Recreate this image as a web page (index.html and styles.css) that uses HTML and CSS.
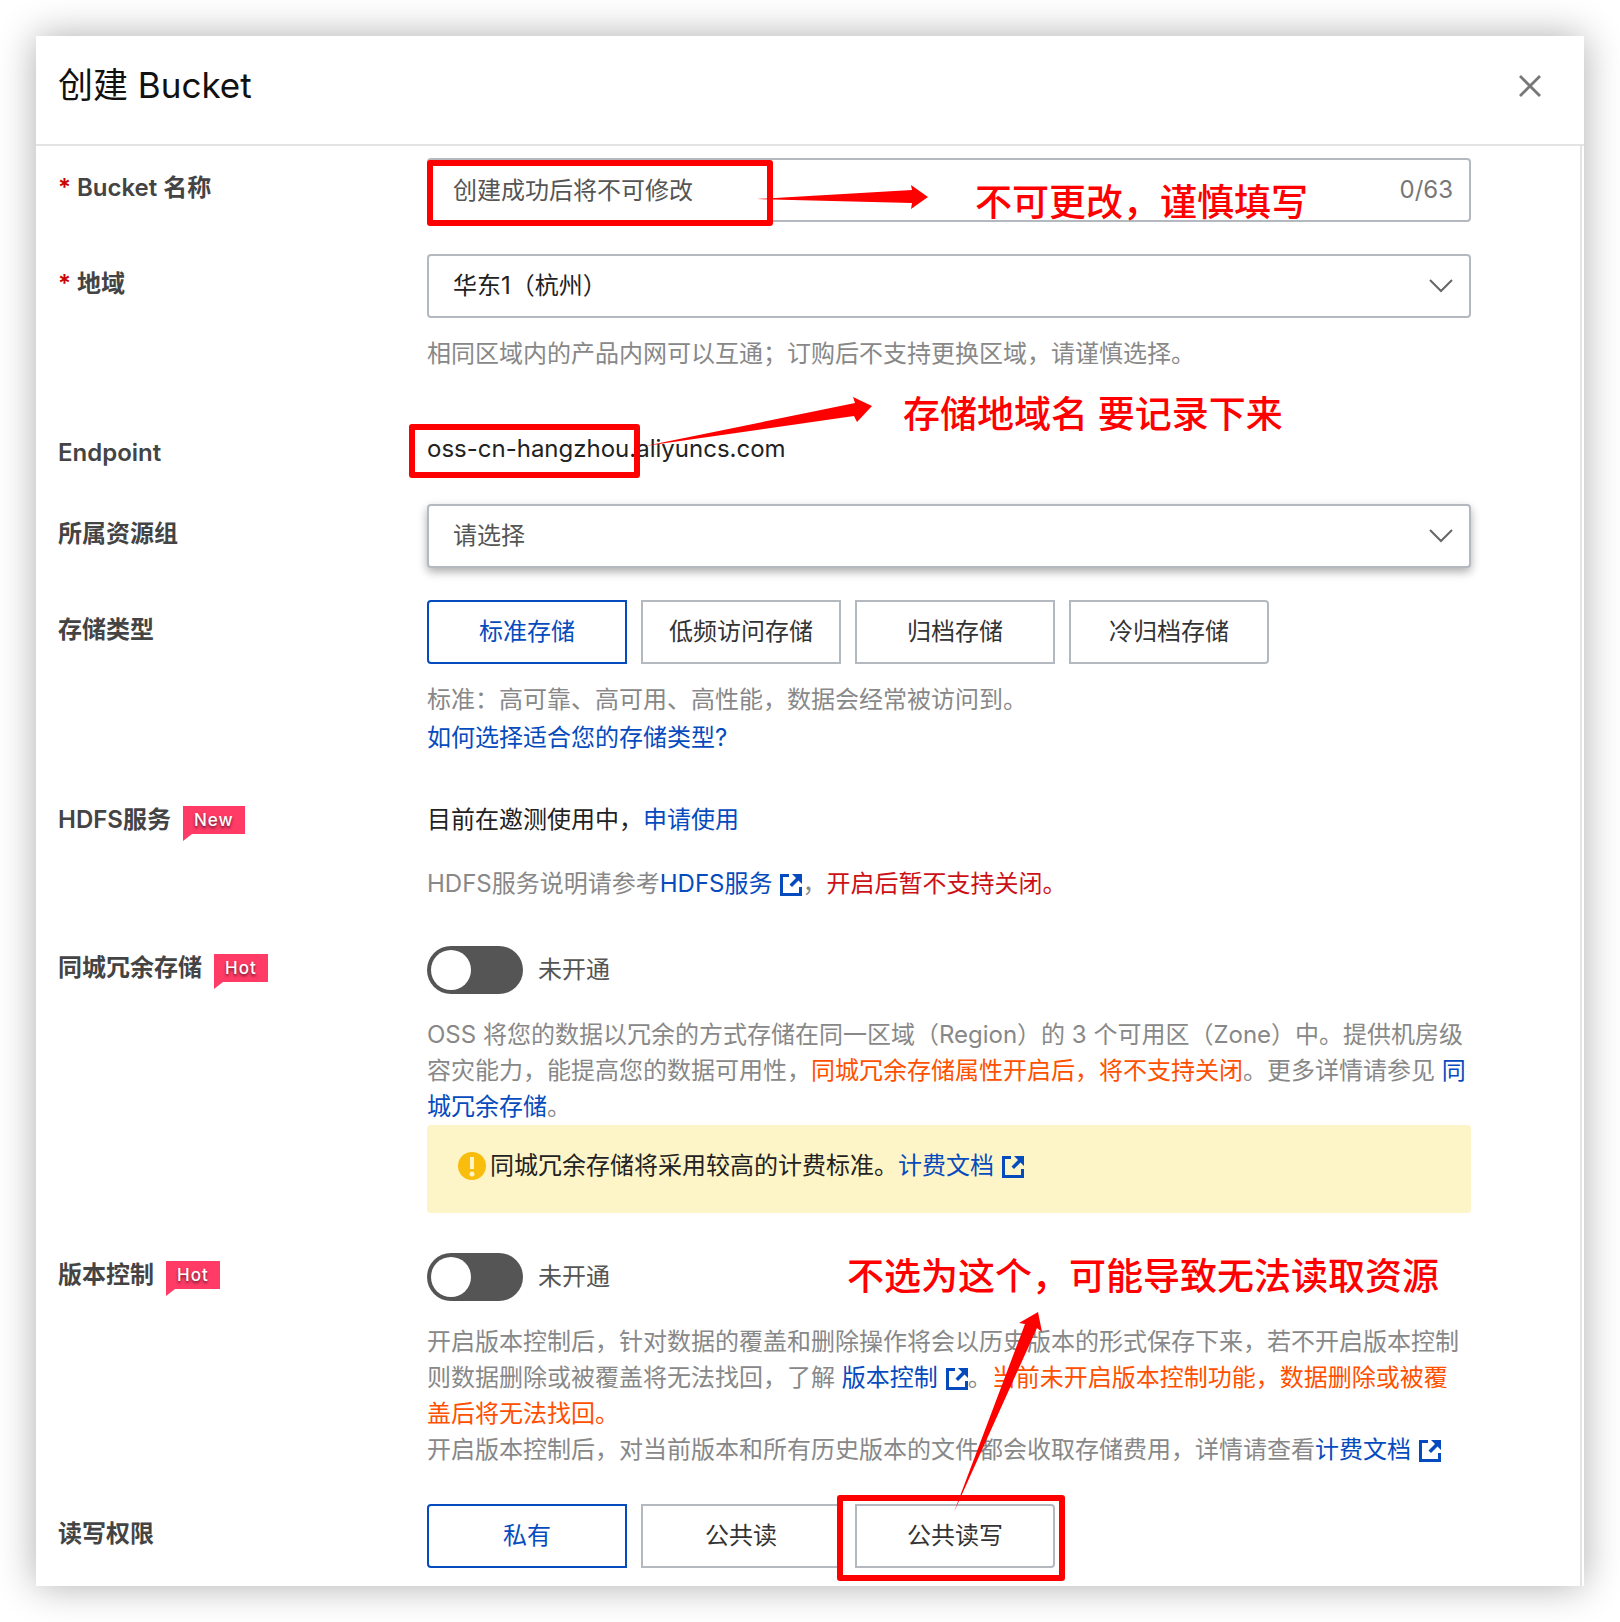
FILE: index.html
```html
<!DOCTYPE html>
<html lang="zh-CN">
<head>
<meta charset="utf-8">
<title>创建 Bucket</title>
<link rel="stylesheet" href="styles.css">
</head>
<body>
<svg class="sprite" aria-hidden="true">
  <symbol id="external" viewBox="0 0 22 22">
    <path d="M9 1.500H1.500v19h19V13" fill="none" stroke="currentColor" stroke-width="3"/>
    <path d="M12 0h10v10l-3.500-3.500-6.500 6.500-2.500-2.500 6.500-6.500z" fill="currentColor"/>
  </symbol>
  <symbol id="chevron" viewBox="0 0 24 14">
    <path d="M1 1l11 11L23 1" fill="none" stroke="currentColor" stroke-width="2"/>
  </symbol>
</svg>

<main class="drawer">
  <header class="drawer-header">
    <h1>创建 Bucket</h1>
    <button class="close" type="button" aria-label="关闭">
      <svg viewBox="0 0 22 22"><path d="M1 1l20 20M21 1L1 21" fill="none" stroke="currentColor" stroke-width="2.800"/></svg>
    </button>
  </header>

  <form class="form">
    <div class="row">
      <label class="label" for="name"><span class="required">*</span>Bucket 名称</label>
      <div class="control">
        <div class="field">
          <input id="name" type="text" placeholder="创建成功后将不可修改">
          <span class="counter">0/63</span>
          <svg class="arrow arrow-name" viewBox="0 0 172 30"><path d="M0 17L155 8L154 3L171 15L154 27L155 21z"/></svg>
          <strong class="remark remark-name">不可更改，谨慎填写</strong>
          <span class="frame frame-name"></span>
        </div>
      </div>
    </div>

    <div class="row">
      <label class="label" for="region"><span class="required">*</span>地域</label>
      <div class="control">
        <div class="field">
          <select id="region"><option>华东1（杭州）</option></select>
          <svg class="chevron"><use href="#chevron"/></svg>
        </div>
        <p class="hint">相同区域内的产品内网可以互通；订购后不支持更换区域，请谨慎选择。</p>
      </div>
    </div>

    <div class="row row-endpoint">
      <span class="label">Endpoint</span>
      <div class="control">
        <p class="value">oss-cn-hangzhou.aliyuncs.com</p>
        <span class="frame frame-endpoint"></span>
        <svg class="arrow arrow-endpoint" viewBox="0 0 228 56"><path d="M1 50L211 7L209 1L228 10L213 26L210 20z"/></svg>
        <strong class="remark remark-endpoint">存储地域名 要记录下来</strong>
      </div>
    </div>

    <div class="row">
      <label class="label" for="group">所属资源组</label>
      <div class="control">
        <div class="field field-raised">
          <select id="group"><option>请选择</option></select>
          <svg class="chevron"><use href="#chevron"/></svg>
        </div>
      </div>
    </div>

    <div class="row">
      <span class="label">存储类型</span>
      <div class="control">
        <div class="options">
          <button class="option selected" type="button">标准存储</button>
          <button class="option" type="button">低频访问存储</button>
          <button class="option" type="button">归档存储</button>
          <button class="option" type="button">冷归档存储</button>
        </div>
        <p class="hint">标准：高可靠、高可用、高性能，数据会经常被访问到。</p>
        <p class="more"><a href="#">如何选择适合您的存储类型?</a></p>
      </div>
    </div>

    <div class="row row-hdfs">
      <span class="label">HDFS服务<span class="badge">New</span></span>
      <div class="control">
        <p class="value">目前在邀测使用中，<a href="#">申请使用</a></p>
        <p class="note">HDFS服务说明请参考<a href="#">HDFS服务<svg class="external"><use href="#external"/></svg></a>，<span class="danger">开启后暂不支持关闭。</span></p>
      </div>
    </div>

    <div class="row row-switch">
      <label class="label" for="zrs">同城冗余存储<span class="badge">Hot</span></label>
      <div class="control">
        <div class="switch"><input id="zrs" type="checkbox" role="switch"><span>未开通</span></div>
        <p class="description">OSS 将您的数据以冗余的方式存储在同一区域（Region）的 3 个可用区（Zone）中。提供机房级容灾能力，能提高您的数据可用性，<span class="warning">同城冗余存储属性开启后，将不支持关闭</span>。更多详情请参见 <a href="#">同城冗余存储</a>。</p>
        <p class="notice"><svg class="alert" viewBox="0 0 28 28"><circle cx="14" cy="14" r="14" fill="#f9bd0d"/><path d="M12 5h4v12h-4z" fill="#fdf4c8"/><circle cx="14" cy="22" r="2.500" fill="#fdf4c8"/></svg>同城冗余存储将采用较高的计费标准。<a href="#">计费文档<svg class="external"><use href="#external"/></svg></a></p>
      </div>
    </div>

    <div class="row row-switch">
      <label class="label" for="versioning">版本控制<span class="badge">Hot</span></label>
      <div class="control">
        <div class="switch"><input id="versioning" type="checkbox" role="switch"><span>未开通</span></div>
        <p class="description">开启版本控制后，针对数据的覆盖和删除操作将会以历史版本的形式保存下来，若不开启版本控制则数据删除或被覆盖将无法找回，了解 <a href="#">版本控制<svg class="external"><use href="#external"/></svg></a>。<span class="warning">当前未开启版本控制功能，数据删除或被覆盖后将无法找回。</span><br>开启版本控制后，对当前版本和所有历史版本的文件都会收取存储费用，详情请查看<a href="#">计费文档<svg class="external"><use href="#external"/></svg></a></p>
        <strong class="remark remark-acl">不选为这个，可能导致无法读取资源</strong>
      </div>
    </div>

    <div class="row row-acl">
      <span class="label">读写权限</span>
      <div class="control">
        <div class="options">
          <button class="option selected" type="button">私有</button>
          <button class="option" type="button">公共读</button>
          <button class="option" type="button">公共读写</button>
        </div>
        <span class="frame frame-acl"></span>
        <svg class="arrow arrow-acl" viewBox="0 0 90 202"><path d="M1 201L72 13L66 12L85 1L89 21L84 17z"/></svg>
      </div>
    </div>
  </form>
</main>
</body>
</html>
```
FILE: styles.css
```css
* {
  box-sizing: border-box;
}

body {
  margin: 0;
  padding: 36px;
  background: #fff;
  color: #222;
  font: 24px/36px Inter, "Noto Sans CJK SC", sans-serif;
}

h1,
p {
  margin: 0;
  font-weight: 400;
}

a {
  color: #064bbe;
  text-decoration: none;
}

button,
input,
select {
  color: inherit;
  font: inherit;
}

.sprite {
  position: absolute;
  width: 0;
  height: 0;
}

.drawer {
  background: #fff;
  box-shadow: 0 0 36px rgba(0, 0, 0, .32);
}

.drawer-header {
  display: flex;
  align-items: flex-start;
  justify-content: space-between;
  height: 110px;
  padding: 25px 43px 0 22px;
  border-bottom: 2px solid #e3e3e3;
}

h1 {
  color: #111;
  font-size: 35px;
  line-height: 48px;
}

.close {
  display: flex;
  margin-top: 14px;
  padding: 0;
  border: 0;
  background: none;
  color: #777;
}

.close svg {
  width: 22px;
  height: 22px;
}

.form {
  display: flex;
  flex-direction: column;
  margin-right: 2px;
  padding: 12px 109px 18px 22px;
  border-right: 2px solid #e3e3e3;
}

.row {
  display: grid;
  grid-template-columns: 369px 1fr;
  margin-bottom: 32px;
}

.row:last-child {
  margin-bottom: 0;
}

.label {
  display: flex;
  align-items: center;
  height: 36px;
  margin-top: 12px;
  color: #444;
  font-weight: 600;
}

.required {
  width: 19px;
  color: #c00;
}

.control {
  position: relative;
  min-width: 0;
}

.field {
  position: relative;
  display: flex;
  align-items: center;
  height: 64px;
  border: 2px solid #b3b9bf;
  border-radius: 4px;
  background: #fff;
}

.field-raised {
  box-shadow: 0 4px 10px rgba(0, 0, 0, .32);
  color: #555;
}

.field input,
.field select {
  flex: 1;
  min-width: 0;
  height: 60px;
  padding: 0 24px;
  border: 0;
  outline: 0;
  appearance: none;
  background: none;
}

.field input::placeholder {
  color: #555;
  opacity: 1;
}

.counter {
  padding-right: 16px;
  color: #777;
}

.chevron {
  width: 24px;
  height: 14px;
  margin-right: 16px;
  color: #666;
}

.hint {
  margin-top: 18px;
  color: #888;
}

.more {
  margin-top: 2px;
}

.row-endpoint {
  min-height: 68px;
  padding-top: 27px;
}

.row-endpoint .label {
  margin-top: 4px;
}

.options {
  display: flex;
  gap: 14px;
}

.option {
  width: 200px;
  height: 64px;
  padding: 0;
  border: 2px solid #b3b9bf;
  background: #fff;
  color: #333;
}

.option:first-child {
  border-radius: 4px 0 0 4px;
}

.option:last-child {
  border-radius: 0 4px 4px 0;
}

.option.selected {
  border-color: #064bbe;
  color: #064bbe;
}

.row-hdfs {
  margin-top: 14px;
  margin-bottom: 44px;
}

.row-hdfs .label {
  margin-top: 0;
}

.note {
  margin-top: 28px;
  color: #888;
}

.danger {
  color: #cc1016;
}

.warning {
  color: #ff5000;
}

.external {
  width: 22px;
  height: 22px;
  margin-left: 8px;
  vertical-align: -4px;
}

.badge {
  position: relative;
  height: 28px;
  margin-left: 12px;
  padding: 0 11px;
  background: #ff3b66;
  color: #fff;
  font-size: 17px;
  font-weight: 500;
  letter-spacing: 1px;
  line-height: 28px;
  text-shadow: 0 2px 3px rgba(0, 0, 0, .6);
}

.badge::after {
  position: absolute;
  top: 100%;
  left: 0;
  border-top: 7px solid #ff3b66;
  border-right: 9px solid transparent;
  content: "";
}

.row-switch {
  margin-bottom: 40px;
}

.row-switch .label {
  margin-top: 4px;
}

.switch {
  display: flex;
  align-items: center;
  gap: 15px;
  height: 48px;
  color: #555;
}

.switch input {
  width: 96px;
  height: 48px;
  margin: 0;
  padding: 4px;
  border-radius: 24px;
  appearance: none;
  background: #555;
}

.switch input::before {
  display: block;
  width: 40px;
  height: 40px;
  border-radius: 50%;
  background: #fff;
  content: "";
}

.switch input:checked::before {
  margin-left: auto;
}

.description {
  margin-top: 23px;
  color: #888;
}

.notice {
  display: flex;
  align-items: center;
  height: 88px;
  padding: 0 31px 6px;
  border-radius: 4px;
  background: #fdf4c8;
}

.alert {
  width: 28px;
  height: 28px;
  margin-right: 4px;
}

.row-acl {
  margin-top: -4px;
}

/* Annotations drawn over the form */
.frame,
.arrow,
.remark {
  position: absolute;
  pointer-events: none;
}

.frame {
  border: 6px solid #f00;
  border-radius: 3px;
}

.arrow {
  fill: #f00;
}

.remark {
  color: #f00;
  font-size: 37px;
  font-weight: 500;
  line-height: 48px;
  white-space: nowrap;
}

.frame-name {
  top: 0;
  left: -2px;
  width: 346px;
  height: 66px;
}

.arrow-name {
  top: 22px;
  left: 328px;
  width: 172px;
  height: 30px;
}

.remark-name {
  top: 19px;
  left: 546px;
}

.frame-endpoint {
  top: -7px;
  left: -18px;
  width: 231px;
  height: 54px;
}

.arrow-endpoint {
  top: -35px;
  left: 217px;
  width: 228px;
  height: 56px;
}

.remark-endpoint {
  top: -40px;
  left: 476px;
}

.remark-acl {
  top: 0;
  left: 420px;
}

.frame-acl {
  top: -9px;
  left: 410px;
  width: 228px;
  height: 86px;
}

.arrow-acl {
  top: -193px;
  left: 526px;
  width: 90px;
  height: 202px;
}
```
